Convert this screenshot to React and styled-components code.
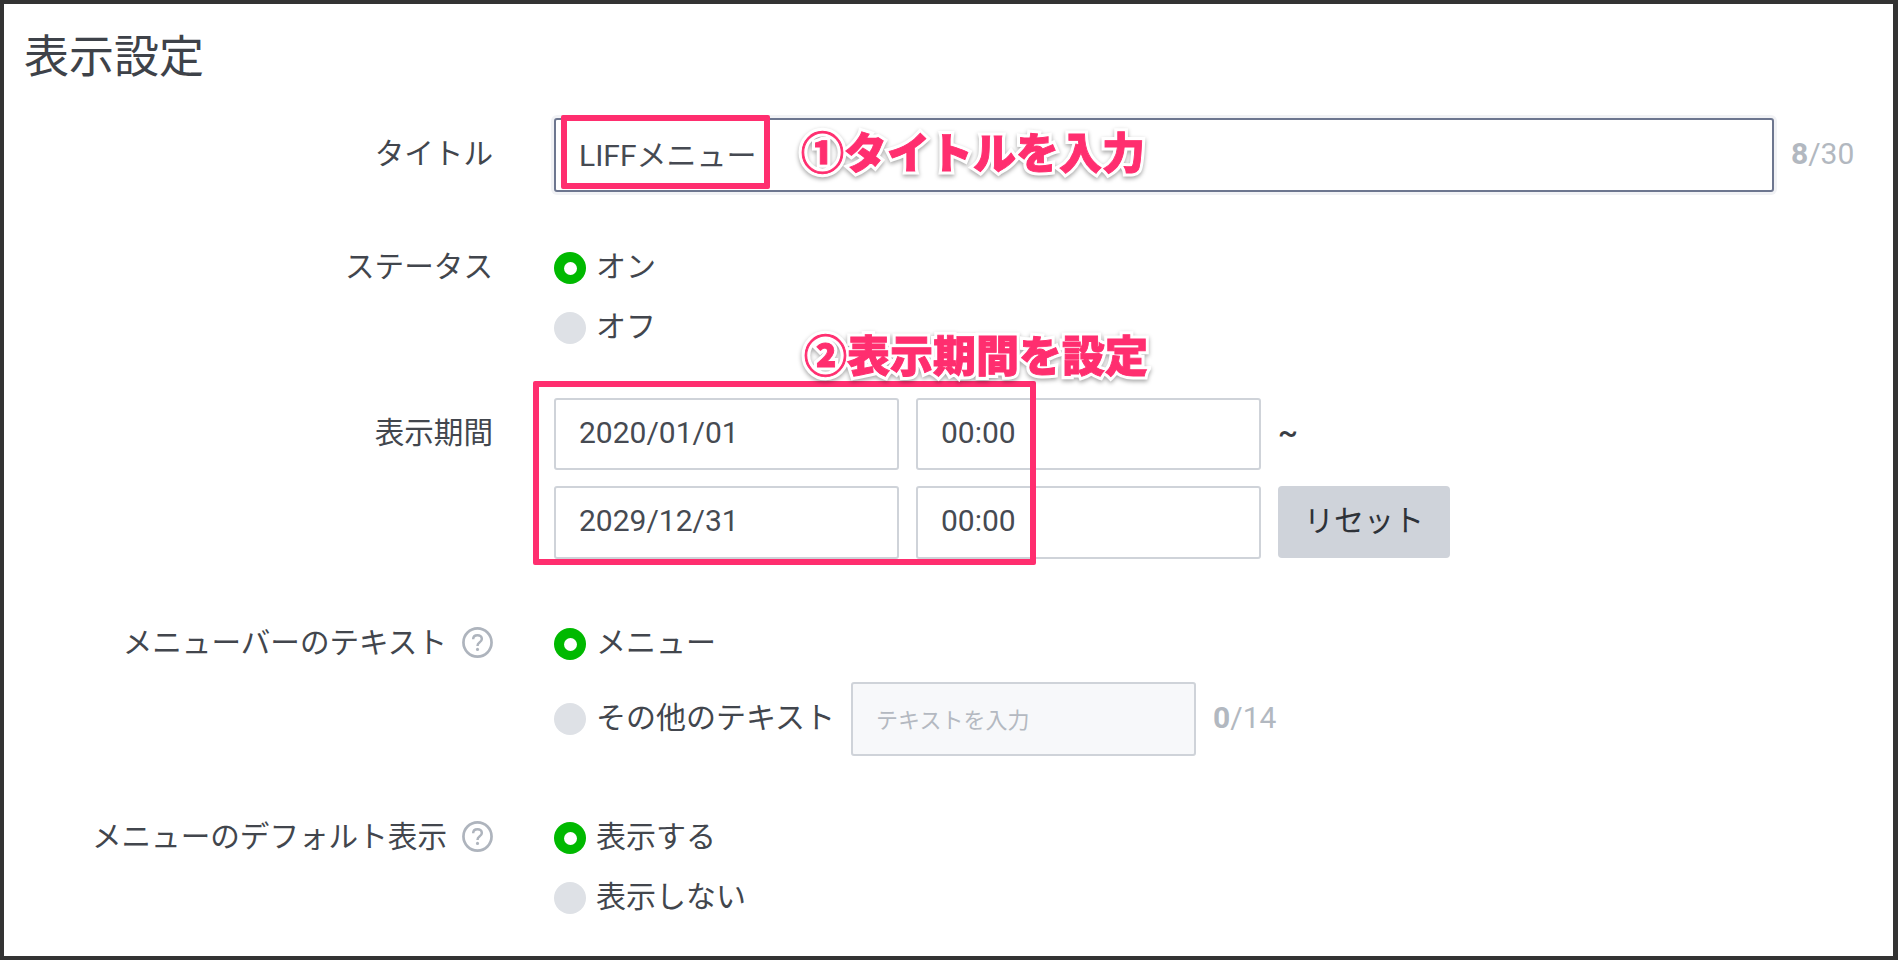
import React from "react"
import styled, { createGlobalStyle } from "styled-components"

const GlobalStyle = createGlobalStyle`
  html, body {
    margin: 0;
    padding: 0;
    background: #fff;
  }
  body {
    font-family: Roboto, "Noto Sans CJK JP", sans-serif;
    color: #42464d;
  }
  * {
    box-sizing: border-box;
  }
`

const Frame = styled.div`
  position: relative;
  width: 1898px;
  height: 960px;
  border: solid #333;
  border-width: 4px 5px 4px 4px;
  background: #fff;
  overflow: hidden;
`

const Heading = styled.h2`
  margin: 0;
  padding: 25px 0 0 20px;
  height: 114px;
  font-size: 45px;
  line-height: 58px;
  font-weight: 400;
  color: #3e4249;
`

const Row = styled.div`
  display: grid;
  grid-template-columns: 489px 1fr;
  column-gap: 61px;
  margin-top: ${(p) => p.$gap || 0}px;
`

const Label = styled.div`
  display: flex;
  justify-content: flex-end;
  align-items: center;
  gap: 15px;
  height: ${(p) => p.$height || 60}px;
  padding-bottom: 8px;
  font-size: 29.6px;
  color: #42464d;
`

const Controls = styled.div`
  display: flex;
  flex-direction: column;
  gap: ${(p) => p.$gap || 0}px;
`

const Line = styled.div`
  display: flex;
  align-items: center;
  gap: 17px;
`

const TextInput = styled.input`
  display: block;
  width: ${(p) => p.$width}px;
  height: ${(p) => p.$height || 72}px;
  margin-left: ${(p) => (p.$muted ? "-1px" : "0")};
  padding: 0 23px 4px;
  border: 2px solid ${(p) => (p.$focused ? "#6d768f" : "#cfd3d9")};
  border-radius: 3px;
  background: ${(p) => (p.$muted ? "#f7f8fa" : "#fff")};
  box-shadow: ${(p) => (p.$focused ? "0 0 0 3px #f1f2f5" : "none")};
  font-family: Roboto, "Noto Sans CJK JP", sans-serif;
  font-size: 30px;
  color: #464a52;
  outline: none;

  &::placeholder {
    font-size: 22px;
    color: #b4b9c1;
    opacity: 1;
  }
`

const Counter = styled.span`
  padding-bottom: 4px;
  font-size: 30px;
  color: #b2b8c0;

  b {
    font-weight: 700;
  }
`

const Tilde = styled.span`
  padding-bottom: 4px;
  font-size: 30px;
  font-weight: 500;
  color: #3a3e45;
`

const ResetButton = styled.button`
  align-self: flex-start;
  width: 172px;
  height: 72px;
  padding: 0 0 8px;
  border: 0;
  border-radius: 4px;
  background: #cfd3da;
  font-family: Roboto, "Noto Sans CJK JP", sans-serif;
  font-size: 30px;
  color: #2e3238;
`

const RadioLine = styled.div`
  display: flex;
  align-items: center;
  height: ${(p) => p.$height || 60}px;
  font-size: 30px;
  color: #42464d;
`

const RadioText = styled.span`
  padding-bottom: 8px;
`

const Dot = styled.span`
  flex: none;
  width: 32px;
  height: 32px;
  margin-right: 10px;
  border-radius: 50%;
  background: ${(p) => (p.$on ? "#00b900" : "#dee1e6")};
  display: flex;
  align-items: center;
  justify-content: center;

  &::after {
    content: "";
    display: ${(p) => (p.$on ? "block" : "none")};
    width: 13px;
    height: 13px;
    border-radius: 50%;
    background: #fff;
  }
`

const Highlight = styled.div`
  position: absolute;
  left: ${(p) => p.$left}px;
  top: ${(p) => p.$top}px;
  width: ${(p) => p.$width}px;
  height: ${(p) => p.$height}px;
  border: 6px solid #ff2e6f;
  border-radius: 2px;
`

// white halo underneath, the ::after layer thickens the pink letters on top
const Note = styled.div`
  position: absolute;
  left: ${(p) => p.$left}px;
  top: ${(p) => p.$top}px;
  font-family: "Noto Sans CJK JP", sans-serif;
  font-size: 43px;
  line-height: 56px;
  font-weight: 900;
  white-space: nowrap;
  color: #ff2e6f;
  -webkit-text-stroke: 7px #fff;
  filter: drop-shadow(0 2px 2px rgba(0, 0, 0, 0.35));

  &::after {
    content: attr(data-text);
    position: absolute;
    left: 0;
    top: 0;
    -webkit-text-stroke: 0.9px #ff2e6f;
  }
`

const HelpIcon = styled(({ className }) => (
  <svg className={className} width="31" height="31" viewBox="0 0 30 30" fill="none" stroke="#aeb4bd">
    <circle cx="15" cy="15" r="13.6" strokeWidth="2.6" />
    <path
      d="M10.8 11.8c0-2.4 1.8-3.9 4.2-3.9s4.2 1.5 4.2 3.6c0 1.7-1 2.6-2.3 3.5-1.3.9-1.9 1.6-1.9 3.3"
      strokeWidth="2.4"
    />
    <circle cx="15" cy="21.7" r="1.5" fill="#aeb4bd" stroke="none" />
  </svg>
))`
  flex: none;
  margin-bottom: -4px;
`

const Radio = ({ on, height, children }) => (
  <RadioLine $height={height}>
    <Dot $on={on} />
    <RadioText>{children}</RadioText>
  </RadioLine>
)

export default function App() {
  return (
    <>
      <GlobalStyle />
      <Frame>
        <Heading>表示設定</Heading>

        <Row>
          <Label $height={74}>タイトル</Label>
          <Line>
            <TextInput $focused $width={1220} $height={74} readOnly value="LIFFメニュー" />
            <Counter>
              <b>8</b>/30
            </Counter>
          </Line>
        </Row>

        <Row $gap={46}>
          <Label>ステータス</Label>
          <Controls>
            <Radio on>オン</Radio>
            <Radio>オフ</Radio>
          </Controls>
        </Row>

        <Row $gap={40}>
          <Label $height={72}>表示期間</Label>
          <Controls $gap={16}>
            <Line>
              <TextInput $width={345} readOnly value="2020/01/01" />
              <TextInput $width={345} readOnly value="00:00" />
              <Tilde>~</Tilde>
            </Line>
            <Line>
              <TextInput $width={345} $height={73} readOnly value="2029/12/31" />
              <TextInput $width={345} $height={73} readOnly value="00:00" />
              <ResetButton>リセット</ResetButton>
            </Line>
          </Controls>
        </Row>

        <Row $gap={55}>
          <Label>
            メニューバーのテキスト
            <HelpIcon />
          </Label>
          <Controls $gap={8}>
            <Radio on>メニュー</Radio>
            <Line>
              <Radio height={74}>その他のテキスト</Radio>
              <TextInput $muted $width={345} $height={74} readOnly placeholder="テキストを入力" />
              <Counter>
                <b>0</b>/14
              </Counter>
            </Line>
          </Controls>
        </Row>

        <Row $gap={52}>
          <Label>
            メニューのデフォルト表示
            <HelpIcon />
          </Label>
          <Controls>
            <Radio on>表示する</Radio>
            <Radio>表示しない</Radio>
          </Controls>
        </Row>

        <Highlight $left={557} $top={111} $width={209} $height={74} />
        <Highlight $left={529} $top={377} $width={503} $height={184} />
        <Note $left={797} $top={118} data-text="①タイトルを入力">①タイトルを入力</Note>
        <Note $left={800} $top={321} data-text="②表示期間を設定">②表示期間を設定</Note>
      </Frame>
    </>
  )
}
